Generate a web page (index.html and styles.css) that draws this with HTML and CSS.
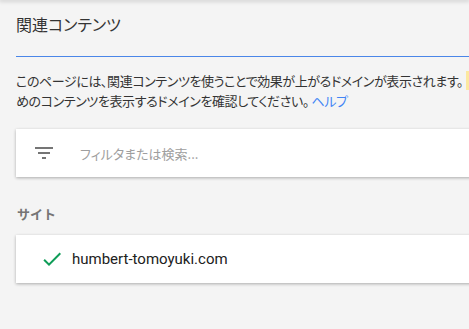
FILE: index.html
```html
<!DOCTYPE html>
<html lang="ja">
<head>
    <meta charset="UTF-8">
    <meta name="viewport" content="width=device-width, initial-scale=1.0">
    <title>関連コンテンツ</title>
    <link rel="stylesheet" href="styles.css">
</head>
<body>
    <div class="topbar"></div>
    <div class="page">
        <h1 class="title">関連コンテンツ</h1>
        <p class="intro">
            このページには、関連コンテンツを使うことで効果が上がるドメインが表示されます。<span class="mark">関連コンテンツを有効にするた</span><br>
            めのコンテンツを表示するドメインを確認してください。 <a href="#" class="help">ヘルプ</a>
        </p>
        <div class="card search">
            <svg class="icon" viewBox="0 0 24 24" width="24" height="24">
                <path d="M10 18h4v-2h-4v2zM3 6v2h18V6H3zm3 7h12v-2H6v2z" fill="#757575"/>
            </svg>
            <span class="placeholder">フィルタまたは検索...</span>
        </div>
        <h2 class="section">サイト</h2>
        <div class="card site">
            <svg class="icon" viewBox="0 0 24 24" width="24" height="24">
                <path d="M9 16.17L4.83 12l-1.42 1.41L9 19 21 7l-1.41-1.41z" fill="#0f9d58"/>
            </svg>
            <span class="domain">humbert-tomoyuki.com</span>
        </div>
    </div>
</body>
</html>
```

FILE: styles.css
```css
html, body {
    margin: 0;
    padding: 0;
    overflow: hidden;
}
body {
    background-color: #f4f4f4;
    font-family: "Noto Sans CJK JP", "Noto Sans", sans-serif;
    color: #212121;
    width: 469px;
    height: 329px;
}
.topbar {
    height: 0;
    box-shadow: 0 0 4px 1px rgba(0, 0, 0, 0.25);
}
.page {
    width: 640px;
    padding-left: 16px;
}
.title {
    font-size: 16px;
    font-weight: normal;
    line-height: 24px;
    margin: 0;
    padding: 12px 0 20px;
    border-bottom: 1px solid #4a86e8;
    font-feature-settings: "palt";
    color: #333;
}
.intro {
    font-size: 13px;
    line-height: 20px;
    margin: 14px 0 0;
    white-space: nowrap;
    font-feature-settings: "palt";
    letter-spacing: -0.4px;
    color: #333;
}
.mark {
    background: #fce8a0;
    margin-left: 3px;
    padding-left: 4px;
}
.help {
    color: #4285f4;
    text-decoration: none;
}
.card {
    background: white;
    box-shadow: 0 1px 3px rgba(0, 0, 0, 0.3);
    height: 48px;
    display: flex;
    align-items: center;
}
.search {
    margin-top: 18px;
    padding-left: 16px;
}
.search .placeholder {
    margin-left: 24px;
    font-size: 13px;
    color: #9e9e9e;
    font-feature-settings: "palt";
}
.section {
    font-size: 13px;
    font-weight: bold;
    color: #757575;
    margin: 27px 0 0 1px;
    line-height: 20px;
}
.site {
    margin-top: 11px;
    padding-left: 24px;
}
.site .domain {
    margin-left: 8px;
    font-family: Roboto, "Noto Sans", sans-serif;
    font-size: 15px;
    color: #212121;
}
```
